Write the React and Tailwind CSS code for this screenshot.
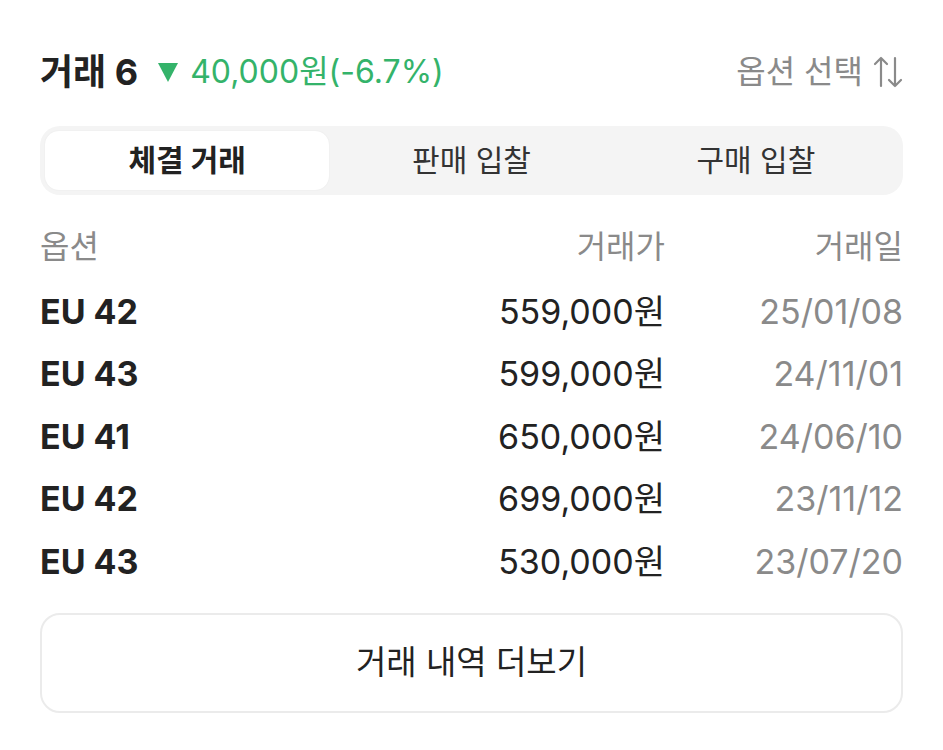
import React from "react";

const rows = [
  { option: "EU 42", price: "559,000원", date: "25/01/08" },
  { option: "EU 43", price: "599,000원", date: "24/11/01" },
  { option: "EU 41", price: "650,000원", date: "24/06/10" },
  { option: "EU 42", price: "699,000원", date: "23/11/12" },
  { option: "EU 43", price: "530,000원", date: "23/07/20" },
];

const tabs = ["체결 거래", "판매 입찰", "구매 입찰"];

const font = { fontFamily: '"Inter", "Noto Sans CJK KR", sans-serif' };

export default function App() {
  return (
    <div className="w-[943px] h-[750px] bg-white px-10 pt-[46px]" style={font}>
      <div className="flex items-center justify-between h-[52px]">
        <div className="flex items-center">
          <span className="text-[36px] font-bold text-[#222]">거래 6</span>
          <svg className="ml-[20px]" width="20" height="19" viewBox="0 0 20 19">
            <path d="M0 0h20L10 19z" fill="#34b36a" />
          </svg>
          <span className="ml-3 text-[32px] text-[#34b36a]">40,000원(-6.7%)</span>
        </div>
        <div className="flex items-center text-[32px] text-[#8a8a8a]">
          옵션 선택
          <svg className="ml-[10px]" width="30" height="34" viewBox="0 0 30 34" fill="none" stroke="#8a8a8a" strokeWidth="2.2" strokeLinecap="round" strokeLinejoin="round">
            <path d="M8 31V3M2 9l6-6 6 6" />
            <path d="M22 3v28M16 25l6 6 6-6" />
          </svg>
        </div>
      </div>

      <div className="mt-[28px] h-[69px] rounded-[20px] bg-[#f4f4f4] p-[5px] grid grid-cols-3">
        {tabs.map((t, i) => (
          <div
            key={t}
            className={
              i === 0
                ? "flex items-center justify-center rounded-[14px] bg-white text-[30px] font-bold text-[#222] shadow-[0_0_2px_rgba(0,0,0,0.06)]"
                : "flex items-center justify-center text-[30px] text-[#333]"
            }
          >
            {t}
          </div>
        ))}
      </div>

      <div className="mt-[26px] flex items-center h-[52px] text-[32px] text-[#8a8a8a]">
        <div className="flex-1">옵션</div>
        <div className="w-[300px] text-right">거래가</div>
        <div className="w-[238px] text-right">거래일</div>
      </div>

      <div className="mt-[7px]">
        {rows.map((r, i) => (
          <div key={i} className="flex items-center h-[62.5px] text-[34px]">
            <div className="flex-1 font-bold text-[#222]">{r.option}</div>
            <div className="w-[300px] text-right text-[#222]">{r.price}</div>
            <div className="w-[238px] text-right text-[#8a8a8a]">{r.date}</div>
          </div>
        ))}
      </div>

      <button className="mt-[20px] w-full h-[100px] rounded-[20px] border-2 border-[#ebebeb] bg-white text-[33px] text-[#222]">
        거래 내역 더보기
      </button>
    </div>
  );
}
